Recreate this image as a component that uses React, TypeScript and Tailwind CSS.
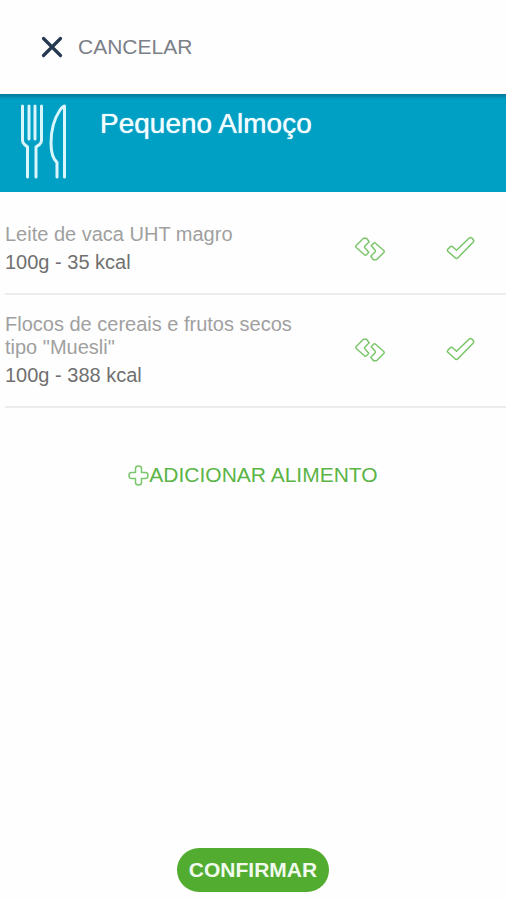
import React, { useState } from "react";

type FoodItem = {
  id: number;
  name: string;
  quantity: string;
  calories: number;
};

const foodList: FoodItem[] = [
  { id: 1, name: "Leite de vaca UHT magro", quantity: "100g", calories: 35 },
  {
    id: 2,
    name: 'Flocos de cereais e frutos secos tipo "Muesli"',
    quantity: "100g",
    calories: 388,
  },
];

const CloseIcon = () => (
  <svg className="h-6 w-6" viewBox="0 0 24 24" fill="none" aria-hidden="true">
    <path
      d="M3.500 3.500 20.500 20.500M20.500 3.500 3.500 20.500"
      stroke="#24394f"
      strokeWidth="3.2"
      strokeLinecap="round"
    />
  </svg>
);

const MealIcon = () => (
  <svg
    className="h-20 w-12 shrink-0"
    viewBox="0 0 48 80"
    fill="none"
    stroke="#d9f6fc"
    strokeWidth="3"
    strokeLinecap="round"
    strokeLinejoin="round"
    aria-hidden="true"
  >
    <path d="M2.500 4V38Q2.500 41 4.500 42.500L7.500 45V75M21.500 4V38Q21.500 41 19.500 42.500L16 45V75M9 4V37M15 4V37" />
    <path d="M44.500 75V4Q42 5 40 8C34 17 31 29 31 41C31 51 33 57 37 60.500V75" />
  </svg>
);

// one arrow, repeated half a turn round the centre
const swapArrow =
  "M9.500 3.300 2.200 10.500Q1.300 11.500 2.200 12.500L10.500 19.800Q11.500 20.600 12.500 19.700L14.800 17.300 11 13Q10.200 12 11 11L15.200 6.800 12.500 3.300H9.500Z";

const SwapIcon = () => (
  <svg
    className="h-7 w-8"
    viewBox="0 0 32 28"
    fill="none"
    stroke="#7cc66c"
    strokeWidth="1.5"
    strokeLinejoin="round"
    aria-hidden="true"
  >
    <path d={swapArrow} />
    <path d={swapArrow} transform="rotate(180 16 14)" />
  </svg>
);

const CheckIcon = () => (
  <svg
    className="h-7 w-8"
    viewBox="0 0 32 28"
    fill="none"
    stroke="#78c568"
    strokeWidth="1.5"
    strokeLinejoin="round"
    aria-hidden="true"
  >
    <path d="M2.800 14.200 5.300 11.700Q6.500 10.800 7.600 11.800L11.500 15.200 24.500 2.800Q25.800 2 26.800 3L28.500 4.900Q29.200 5.900 28.300 6.900L12.700 23Q11.500 24.200 10.300 23L2.800 16.200Q2 15.200 2.800 14.200Z" />
  </svg>
);

const PlusIcon = () => (
  <svg
    className="h-[21px] w-[21px] shrink-0"
    viewBox="0 0 21 21"
    fill="none"
    stroke="#7cc66c"
    strokeWidth="1.5"
    strokeLinejoin="round"
    aria-hidden="true"
  >
    <path d="M7.500 7.500V3.500Q7.500 1 10.500 1T13.500 3.500V7.500H17.500Q20 7.500 20 10.500T17.500 13.500H13.500V17.500Q13.500 20 10.500 20T7.500 17.500V13.500H3.500Q1 13.500 1 10.500T3.500 7.500Z" />
  </svg>
);

function FoodRow({ item }: { item: FoodItem }) {
  const [checked, setChecked] = useState(false);

  return (
    <li className="ml-[5px] flex items-center border-b-2 border-[#ececec] pt-[18px] pb-[19px]">
      <div className="flex flex-1 flex-col gap-[5px] text-[20px] leading-[23px]">
        <p className="max-w-[300px] text-[#a0a0a0]">{item.name}</p>
        <p className="text-[#707070]">
          {item.quantity} - {item.calories} kcal
        </p>
      </div>
      <button
        type="button"
        aria-label="Substituir"
        className="flex w-[91px] justify-center"
      >
        <SwapIcon />
      </button>
      <button
        type="button"
        aria-label="Marcar"
        aria-pressed={checked}
        onClick={() => setChecked((prev) => !prev)}
        className="flex w-[91px] justify-center"
      >
        <CheckIcon />
      </button>
    </li>
  );
}

export default function App() {
  return (
    <div className="flex min-h-screen flex-col bg-[#fefefe] font-['Liberation_Sans',Arial,sans-serif]">
      <header className="flex h-[94px] items-center px-10">
        <button
          type="button"
          className="flex items-center gap-[14px] text-[21px] leading-6 text-[#7b8087]"
        >
          <CloseIcon />
          CANCELAR
        </button>
      </header>

      <div className="flex h-[98px] items-start bg-[#009fc4] px-5 pt-2 shadow-[inset_0_6px_3px_-3px_#087c9f]">
        <MealIcon />
        <h1 className="ml-8 pt-1 text-[28px] leading-9 text-[#f2fdff] [text-shadow:0_0_1px_#f2fdff]">
          Pequeno Almoço
        </h1>
      </div>

      <ul className="mt-[13px]">
        {foodList.map((item) => (
          <FoodRow key={item.id} item={item} />
        ))}
      </ul>

      <button
        type="button"
        className="mt-[55px] flex items-center self-center text-[21px] leading-6 text-[#5bb446]"
      >
        <PlusIcon />
        ADICIONAR ALIMENTO
      </button>

      <footer className="mt-auto flex justify-center pb-2">
        <button
          type="button"
          className="h-11 rounded-full bg-[#52ac30] px-3 text-[21px] leading-6 font-bold text-[#f0faec]"
        >
          CONFIRMAR
        </button>
      </footer>
    </div>
  );
}
